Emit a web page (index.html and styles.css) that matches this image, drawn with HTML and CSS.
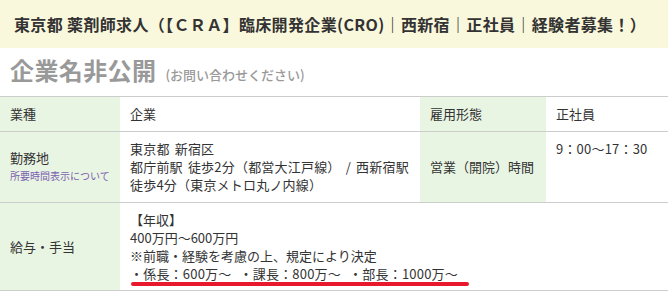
FILE: index.html
```html
<!DOCTYPE html>
<html lang="ja">
<head>
<meta charset="utf-8">
<title>求人詳細</title>
<link rel="stylesheet" href="styles.css">
</head>
<body>
<div class="page">
  <header class="title-band">
    <h1 class="job-title">東京都 薬剤師求人（【ＣＲＡ】臨床開発企業(CRO)｜西新宿｜正社員｜経験者募集！）</h1>
  </header>
  <div class="company">
    <span class="company-name">企業名非公開</span>
    <span class="company-note">(お問い合わせください)</span>
  </div>
  <table class="info">
    <colgroup>
      <col class="c1"><col class="c2"><col class="c3"><col class="c4">
    </colgroup>
    <tr>
      <th>業種</th>
      <td>企業</td>
      <th>雇用形態</th>
      <td>正社員</td>
    </tr>
    <tr>
      <th>
        <div class="th-main">勤務地</div>
        <a class="th-link" href="#">所要時間表示について</a>
      </th>
      <td class="spaced">東京都 新宿区<br>都庁前駅 徒歩2分（都営大江戸線） / 西新宿駅<br>徒歩4分（東京メトロ丸ノ内線）</td>
      <th>営業（開院）時間</th>
      <td class="spaced">9：00～17：30</td>
    </tr>
    <tr class="last">
      <th>給与・手当</th>
      <td colspan="3">
        <div>【年収】</div>
        <div>400万円～600万円</div>
        <div>※前職・経験を考慮の上、規定により決定</div>
        <div class="marker">
          <span class="marker-text">・係長：600万～ ・課長：800万～ ・部長：1000万～</span>
          <span class="marker-bar"></span>
        </div>
      </td>
    </tr>
  </table>
</div>
</body>
</html>
```

FILE: styles.css
```css
html, body {
  margin: 0;
  padding: 0;
  background: #ffffff;
}

body {
  font-family: "Noto Sans CJK JP", "Noto Sans", sans-serif;
  color: #333333;
}

.page {
  width: 668px;
}

.title-band {
  background: #faf8dc;
  height: 48px;
  display: flex;
  align-items: center;
  padding-left: 14px;
  box-sizing: border-box;
}

.job-title {
  margin: 0;
  font-size: 16px;
  font-weight: 700;
  line-height: 20px;
  color: #333333;
  white-space: nowrap;
  letter-spacing: 0.35px;
}

.company {
  display: flex;
  align-items: baseline;
  gap: 9px;
  padding: 8px 10px 12px 10px;
  height: 48px;
  box-sizing: border-box;
}

.company-name {
  font-size: 24px;
  font-weight: 700;
  line-height: 28px;
  color: #999999;
  letter-spacing: 0.4px;
}

.company-note {
  font-size: 13px;
  font-weight: 500;
  line-height: 16px;
  color: #999999;
}

.info {
  width: 668px;
  border-collapse: collapse;
  table-layout: fixed;
  border-top: 1px solid #cccccc;
  font-size: 13px;
  line-height: 18px;
}

.c1 { width: 120px; }
.c2 { width: 300px; }
.c3 { width: 126px; }
.c4 { width: 122px; }

.info th,
.info td {
  padding: 8px 10px;
  border-bottom: 1px solid #cccccc;
  text-align: left;
  font-weight: 400;
}

.info th {
  background: #e9f5e3;
  vertical-align: middle;
}

.info td {
  vertical-align: top;
}

.info td.spaced {
  word-spacing: 2px;
  letter-spacing: 0.2px;
}

.info tr.last td {
  padding-bottom: 4px;
}

.th-main {
  line-height: 18px;
}

.th-link {
  display: block;
  font-size: 10px;
  line-height: 18px;
  color: #7b5fb0;
  text-decoration: none;
}

.marker {
  display: inline-flex;
  flex-direction: column;
}

.marker-text {
  padding-right: 11px;
  white-space: nowrap;
  word-spacing: 5px;
  letter-spacing: 0.2px;
}

.marker-bar {
  display: block;
  height: 4px;
  margin-top: -1px;
  margin-left: 1px;
  border-radius: 2px;
  background: #e8192c;
}
```
